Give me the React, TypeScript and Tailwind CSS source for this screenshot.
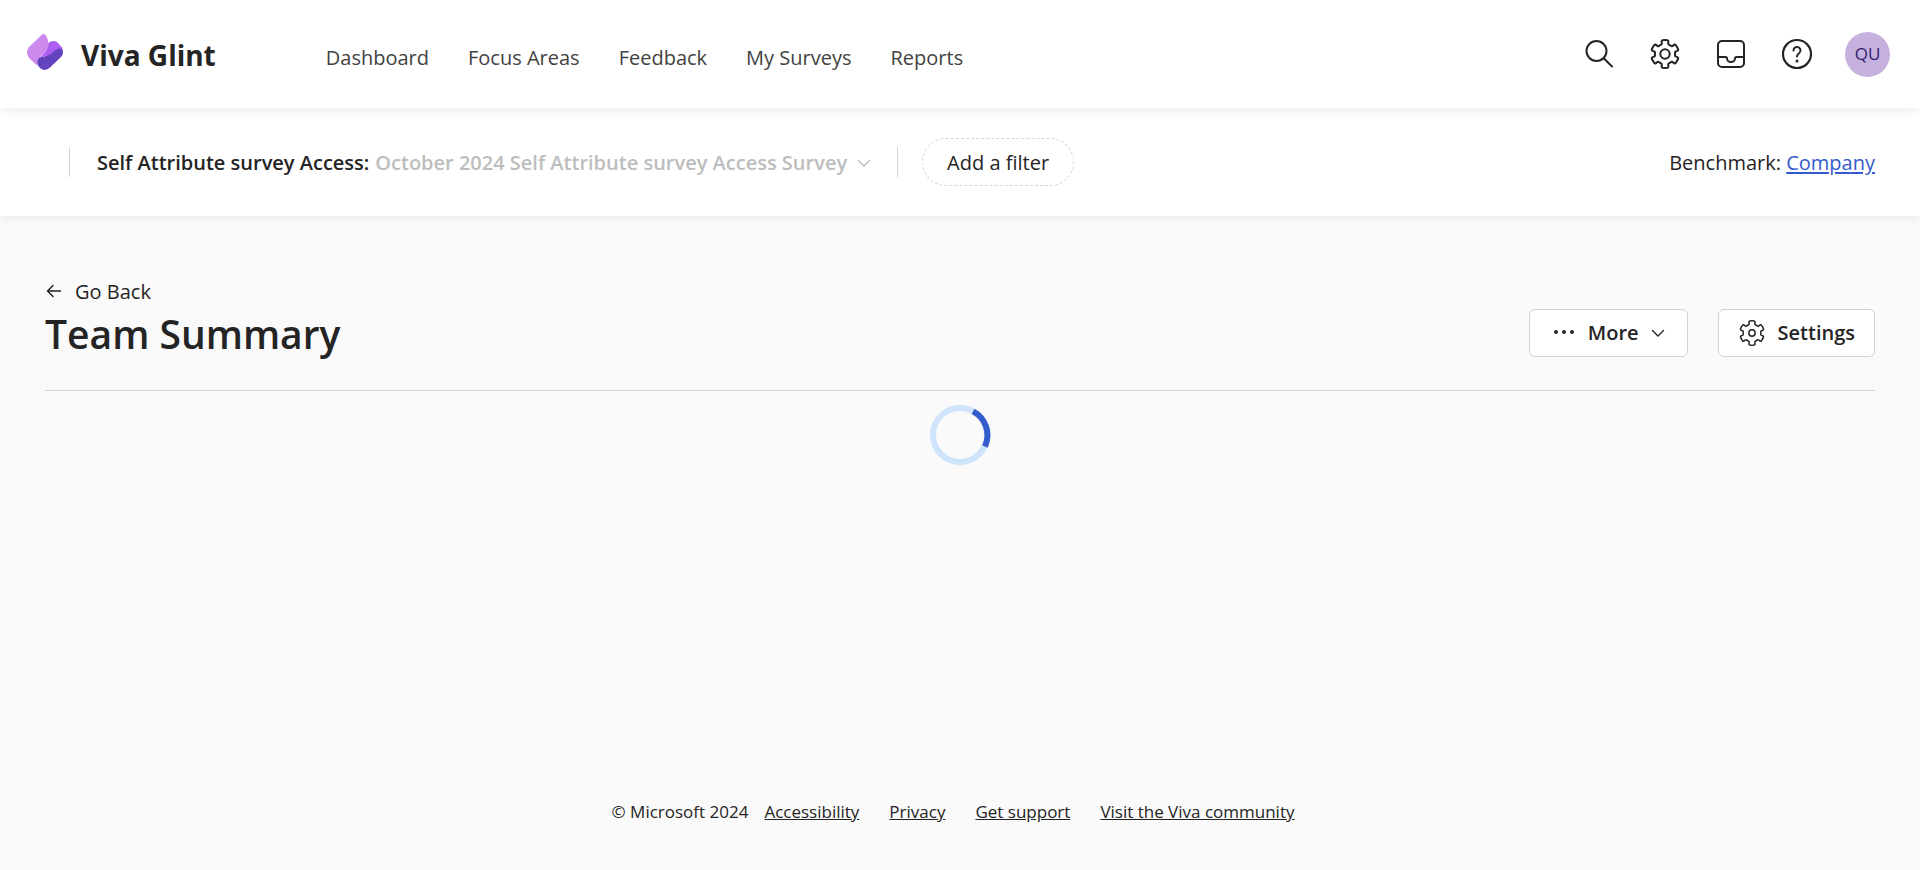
import React from "react";

const polar = (radius: number, degrees: number) => {
  const a = (degrees * Math.PI) / 180;
  return `${(16 + radius * Math.cos(a)).toFixed(2)} ${(16 + radius * Math.sin(a)).toFixed(2)}`;
};

// Six rounded teeth, one every 60 degrees, joined by curved valleys.
const GEAR =
  [0, 1, 2, 3, 4, 5]
    .map((i) => {
      const c = i * 60 - 90;
      return [
        `${i === 0 ? "M" : "L"}${polar(10.8, c - 17)}`,
        `L${polar(13.2, c - 15)}`,
        `Q${polar(13.9, c - 14)} ${polar(14, c - 10)}`,
        `Q${polar(14, c)} ${polar(14, c + 10)}`,
        `Q${polar(13.9, c + 14)} ${polar(13.2, c + 15)}`,
        `L${polar(10.8, c + 17)}`,
        `Q${polar(9.8, c + 20)} ${polar(10.1, c + 25)}`,
        `L${polar(10.1, c + 35)}`,
        `Q${polar(9.8, c + 40)} ${polar(10.8, c + 43)}`,
      ].join("");
    })
    .join("") + "Z";

function Gear({ className, r, width }: { className: string; r: number; width: number }) {
  return (
    <svg className={className} viewBox="0 0 32 32" fill="none" stroke="currentColor" strokeWidth={width} strokeLinejoin="round" aria-hidden="true">
      <path d={GEAR} />
      <circle cx="16" cy="16" r={r} />
    </svg>
  );
}

function Chevron({ className }: { className: string }) {
  return (
    <svg className={className} viewBox="0 0 14 14" fill="none" stroke="currentColor" strokeWidth="1.4" strokeLinecap="round" aria-hidden="true">
      <path d="M1.500 4.500 7 10l5.500-5.500" />
    </svg>
  );
}

function Logo() {
  return (
    <svg className="size-9" viewBox="0 0 36 36" aria-hidden="true">
      <path d="M18 24L20 10Q25 5.500 30 8L35 13.500Q37 18 34 20L20 27z" fill="#ae5ff2" />
      <path d="M10 25Q11 23 17 22.500C26 21 27 15 32.500 14.500Q36 14.500 36 19.500Q35.500 21.500 33 24L23 33.500Q18 38 13 34Q9 30 10 25Z" fill="#6443bf" />
      <path d="M14.500 1Q17-1 18.500 1Q23 7 21 14C19 21 10 20 10 31.500L2 24Q-2 18 2 13Z" fill="#cd8aed" />
      <path d="M21 14C19 19 15 20.500 12.500 24Q14 22.700 17 22.500L22 19z" fill="#ae5ff2" />
    </svg>
  );
}

const navItems = ["Dashboard", "Focus Areas", "Feedback", "My Surveys", "Reports"];
const footerLinks = ["Accessibility", "Privacy", "Get support", "Visit the Viva community"];

export default function App() {
  return (
    <div className="flex min-h-screen flex-col bg-[#fafafa] font-['Open_Sans','Noto_Sans',sans-serif] text-[#242424]">
      <header className="relative z-20 flex h-27 items-center bg-white pr-[30px] pl-[27px] shadow-[0_2px_10px_#e8ecec]">
        <a href="#" className="flex items-center gap-[18px] pb-1">
          <Logo />
          <span className="pt-1.5 text-[28px] leading-9 font-bold">Viva Glint</span>
        </a>
        <nav className="ml-[110px] flex gap-[39px] pt-2 text-xl leading-7 text-[#424242]">
          {navItems.map((n) => (
            <a key={n} href="#">{n}</a>
          ))}
        </nav>
        <div className="ml-auto flex items-center gap-[31px]">
          <div className="flex items-center gap-8">
            <button aria-label="Search" className="flex size-[34px] items-center justify-center">
              <svg className="size-8" viewBox="0 0 32 32" fill="none" stroke="currentColor" strokeWidth="2" strokeLinecap="round" aria-hidden="true">
                <circle cx="13.500" cy="13" r="10" />
                <path d="m21 20.500 8 8" />
              </svg>
            </button>
            <button aria-label="Settings" className="flex size-[34px] items-center justify-center">
              <Gear className="size-8" r={4.7} width={2} />
            </button>
            <button aria-label="Inbox" className="flex size-[34px] items-center justify-center">
              <svg className="size-8" viewBox="0 0 32 32" fill="none" stroke="currentColor" strokeWidth="2" strokeLinejoin="round" aria-hidden="true">
                <rect x="3" y="3" width="26" height="26" rx="4" />
                <path d="M3 19h7.500q1.500 0 1.500 1.500a4 3.500 0 0 0 8 0q0-1.500 1.500-1.500H29" />
              </svg>
            </button>
            <button aria-label="Help" className="flex size-[34px] items-center justify-center">
              <svg className="size-8" viewBox="0 0 32 32" fill="none" stroke="currentColor" strokeWidth="2.200" strokeLinecap="round" aria-hidden="true">
                <circle cx="16" cy="16" r="14" />
                <path d="M12.500 12.500a3.500 3.500 0 1 1 5.500 2.800c-1.300 1-2 1.700-2 3.200" strokeWidth="2" />
                <circle cx="16" cy="23" r="1.500" fill="currentColor" stroke="none" />
              </svg>
            </button>
          </div>
          <button className="flex size-[45px] items-center justify-center rounded-full bg-[#c6b1de] text-[17px] leading-6 text-[#341a6e]">QU</button>
        </div>
      </header>

      <section className="relative z-10 flex h-27 items-center bg-white pr-[45px] pl-[69px] text-xl leading-7 shadow-[0_2px_10px_#e8ecec]">
        <div className="flex h-[30px] items-center border-x border-[#d6d6d6] pr-[26px] pl-[27px]">
          <span className="pt-0.5 font-semibold">Self Attribute survey Access:</span>
          <button className="ml-1.5 flex items-center gap-2.5 pt-0.5 font-semibold text-[#bdbdbd]">
            October 2024 Self Attribute survey Access Survey
            <Chevron className="size-3.5" />
          </button>
        </div>
        <button className="ml-6 h-12 rounded-full border border-dashed border-[#d6d6d6] px-6 pt-0.5">Add a filter</button>
        <p className="ml-auto pt-0.5">
          Benchmark: <a href="#" className="text-[#335ccc] underline decoration-2 underline-offset-2">Company</a>
        </p>
      </section>

      <main className="px-[45px] pt-[62px]">
        <div className="flex items-end justify-between border-b border-[#d1d1d1] pb-7">
          <div>
            <a href="#" className="flex items-center gap-3 text-xl leading-7">
              <svg className="size-[18px]" viewBox="0 0 18 18" fill="none" stroke="currentColor" strokeWidth="1.500" strokeLinecap="round" strokeLinejoin="round" aria-hidden="true">
                <path d="M15.500 8H2.500M8 2.500 2.500 8 8 13.500" />
              </svg>
              Go Back
            </a>
            <h1 className="text-[39px] leading-[56px] font-semibold">Team Summary</h1>
          </div>
          <div className="mb-[5px] flex gap-[30px] text-xl leading-7 font-semibold">
            <button className="flex h-12 items-center rounded-md border border-[#d1d1d1] bg-white px-[22px]">
              <svg className="mr-3 size-6" viewBox="0 0 24 24" fill="currentColor" aria-hidden="true">
                <circle cx="4" cy="11" r="2" />
                <circle cx="12" cy="11" r="2" />
                <circle cx="20" cy="11" r="2" />
              </svg>
              More
              <Chevron className="ml-3 size-3.5" />
            </button>
            <button className="flex h-12 items-center gap-3 rounded-md border border-[#d1d1d1] bg-white px-[19px]">
              <Gear className="size-7" r={3.6} width={1.7} />
              Settings
            </button>
          </div>
        </div>
        <svg className="mx-auto mt-[13px] size-[62px]" viewBox="0 0 62 62" fill="none" strokeWidth="6" role="img" aria-label="Loading">
          <circle cx="31" cy="31" r="27" stroke="#cfe4fa" />
          <path d="M44.100 7.400A27 27 0 0 1 56 42.500" stroke="#335ccc" />
        </svg>
      </main>

      <footer className="mt-auto flex justify-center pr-3.5 pb-[46px] text-[17px] leading-6">
        <span className="mr-4">© Microsoft 2024</span>
        <div className="flex gap-[30px]">
          {footerLinks.map((l) => (
            <a key={l} href="#" className="underline">{l}</a>
          ))}
        </div>
      </footer>
    </div>
  );
}
